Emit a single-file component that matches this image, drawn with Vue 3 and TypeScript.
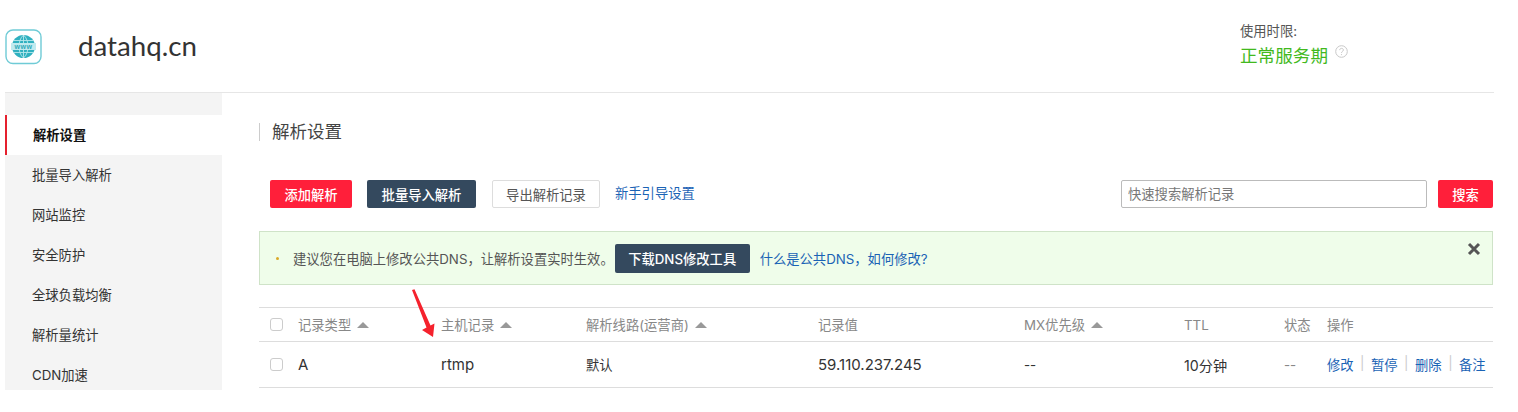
<script setup lang="ts">
const menu = ['解析设置', '批量导入解析', '网站监控', '安全防护', '全球负载均衡', '解析量统计', 'CDN加速'];
const actions = ['修改', '暂停', '删除', '备注'];
</script>

<template>
  <div class="page">
    <header class="top">
      <svg class="logo" width="38" height="36" viewBox="0 0 38 36">
        <rect x="1" y="1" width="35" height="33.5" rx="7" fill="#fff" stroke="#6fcbd6" stroke-width="1.4" />
        <circle cx="18.5" cy="17.5" r="11.5" fill="#2fb0bf" />
        <path d="M8 11.5h21M8 23.5h21M18.5 6v23M18.5 6c-6 5-6 18 0 23M18.5 6c6 5 6 18 0 23" fill="none" stroke="#b5e6eb" stroke-width="0.9" />
        <rect x="6" y="14" width="25" height="7" fill="#bfeaef" />
        <text x="18.5" y="20" text-anchor="middle" font-size="7" font-weight="700" letter-spacing="0.5" fill="#2fa9b9" font-family="Liberation Sans, sans-serif">www</text>
      </svg>
      <h1 class="domain">datahq.cn</h1>
      <div class="term">
        <div class="term-label">使用时限:</div>
        <div class="term-value">
          正常服务期
          <svg class="help" width="13" height="13" viewBox="0 0 13 13">
            <circle cx="6.5" cy="6.5" r="5.8" fill="none" stroke="#c8c8c8" />
            <path d="M4.7 5.1c0-2.3 3.7-2.3 3.7-.1 0 1.4-1.9 1.4-1.9 2.9" fill="none" stroke="#c8c8c8" />
            <circle cx="6.5" cy="9.6" r="0.6" fill="#c8c8c8" />
          </svg>
        </div>
      </div>
    </header>

    <div class="body">
      <nav class="side">
        <a v-for="(m, i) in menu" :key="m" class="side-item" :class="{ active: i === 0 }">{{ m }}</a>
      </nav>

      <main class="main">
        <h2 class="title">解析设置</h2>

        <div class="toolbar">
          <button class="btn red">添加解析</button>
          <button class="btn dark batch">批量导入解析</button>
          <button class="btn plain">导出解析记录</button>
          <a class="link guide">新手引导设置</a>
          <input class="search" placeholder="快速搜索解析记录" />
          <button class="btn red search-btn">搜索</button>
        </div>

        <div class="alert">
          <span class="dot"></span>
          <span class="alert-text">建议您在电脑上修改公共DNS，让解析设置实时生效。</span>
          <button class="btn dark dl">下载DNS修改工具</button>
          <a class="link">什么是公共DNS，如何修改?</a>
          <svg class="close" width="14" height="14" viewBox="0 0 14 14">
            <path d="M2 2l10 10M12 2L2 12" stroke="#555" stroke-width="3" />
          </svg>
        </div>

        <div class="table">
          <div class="row head">
            <span class="check"></span>
            <span>记录类型 <i class="sort"></i></span>
            <span>主机记录 <i class="sort"></i></span>
            <span>解析线路(运营商) <i class="sort"></i></span>
            <span>记录值</span>
            <span>MX优先级 <i class="sort"></i></span>
            <span>TTL</span>
            <span>状态</span>
            <span>操作</span>
          </div>
          <div class="row data">
            <span class="check"></span>
            <span class="latin">A</span>
            <span class="latin">rtmp</span>
            <span>默认</span>
            <span class="latin">59.110.237.245</span>
            <span>--</span>
            <span class="ttl">10分钟</span>
            <span class="muted">--</span>
            <span class="ops">
              <template v-for="(a, i) in actions" :key="a">
                <i v-if="i > 0" class="sep">|</i>
                <a class="link">{{ a }}</a>
              </template>
            </span>
          </div>
          <svg class="arrow" width="24" height="48" viewBox="0 0 24 48">
            <path d="M0 0 L2.5 -0.8 L18.5 35.5 L22.5 33.5 L21 47 L10 40 L14.5 37.5 Z" fill="#f5222d" />
          </svg>
        </div>
      </main>
    </div>
  </div>
</template>

<style>
html,
body {
  margin: 0;
  background: #fff;
  overflow: hidden;
}
</style>

<style scoped>
.page {
  width: 1518px;
  height: 412px;
  padding: 0 24px 0 5px;
  box-sizing: border-box;
  overflow: hidden;
  font-family: Inter, "Noto Sans CJK SC", sans-serif;
  font-size: 13.3px;
  color: #333;
}

.top {
  height: 88px;
  display: flex;
  align-items: center;
  border-bottom: 1px solid #e6e6e6;
  padding-bottom: 4px;
}

.logo {
  flex: none;
  margin-top: 6px;
}

.domain {
  margin: 2px 0 0 35px;
  font-family: Lato, sans-serif;
  font-size: 27.7px;
  font-weight: 400;
  color: #333;
}

.term {
  margin-left: auto;
  width: 254px;
  margin-top: 2px;
}

.term-label {
  color: #555;
  line-height: 18px;
}

.term-value {
  margin-top: 4px;
  font-size: 17.6px;
  line-height: 24px;
  color: #42b91e;
  display: flex;
  align-items: flex-start;
  gap: 7px;
}

.help {
  margin-top: 1px;
}

.body {
  display: flex;
}

.side {
  width: 217px;
  flex: none;
  height: 297px;
  padding-top: 22px;
  box-sizing: border-box;
  background: #f4f4f4;
  overflow: hidden;
}

.side-item {
  display: block;
  height: 40px;
  line-height: 40px;
  padding-left: 27px;
  color: #333;
}

.side-item.active {
  background: #fff;
  border-left: 2px solid #e5202e;
  padding-left: 26px;
  font-weight: 700;
  color: #111;
}

.main {
  flex: 1;
  padding-left: 37px;
  margin-right: 1px;
  min-width: 0;
}

.title {
  margin: 30px 0 0;
  height: 18px;
  line-height: 18px;
  padding-left: 12px;
  border-left: 1px solid #ccc;
  font-size: 17.5px;
  font-weight: 400;
  color: #444;
}

.toolbar {
  margin-top: 39px;
  display: flex;
  align-items: center;
  height: 28px;
}

.btn {
  height: 28px;
  box-sizing: border-box;
  border: 0;
  border-radius: 2px;
  padding: 0;
  font-family: inherit;
  font-size: 13.3px;
  font-weight: 500;
  color: #fff;
}

.btn.red {
  width: 82px;
  margin-left: 11px;
  background: #ff1f3a;
}

.btn.dark {
  background: #34495e;
}

.batch {
  width: 109px;
  margin-left: 15px;
}

.plain {
  width: 108px;
  margin-left: 16px;
  background: #fff;
  border: 1px solid #ddd;
  color: #555;
  font-weight: 400;
}

.link {
  color: #1a63b5;
}

.guide {
  margin-left: 15px;
  margin-top: -3px;
}

.search {
  margin-left: auto;
  width: 306px;
  height: 28px;
  box-sizing: border-box;
  border: 1px solid #bbb;
  border-radius: 2px;
  padding: 0 6px;
  font-family: inherit;
  font-size: 13.3px;
  outline: none;
}

.search::placeholder {
  color: #777;
}

.search-btn.search-btn {
  width: 55px;
  margin-left: 11px;
}

.alert {
  position: relative;
  margin-top: 23px;
  height: 54px;
  box-sizing: border-box;
  display: flex;
  align-items: center;
  padding-left: 16px;
  background: #effdea;
  border: 1px solid #cfe3c8;
  color: #555;
}

.dot {
  width: 3px;
  height: 3px;
  border-radius: 50%;
  background: #d9a928;
  margin-right: 14px;
}

.dl {
  width: 135px;
  height: 29px;
  margin: 0 10px 0 1px;
}

.close {
  position: absolute;
  right: 11px;
  top: 10px;
}

.table {
  position: relative;
  margin-top: 22px;
  border-top: 1px solid #ddd;
}

.row {
  display: grid;
  grid-template-columns: 39px 143px 145px 232px 206px 160px 100px 43px 1fr;
  align-items: center;
  border-bottom: 1px solid #ddd;
}

.row > :first-child {
  margin-left: 11px;
}

.head {
  height: 33px;
  color: #888;
}

.data {
  height: 45px;
  color: #333;
}

.latin {
  font-size: 15px;
}

.ttl {
  font-size: 14.2px;
}

.check {
  width: 13px;
  height: 13px;
  box-sizing: border-box;
  border: 1px solid #ccc;
  border-radius: 3px;
  background: #fff;
}

.sort {
  display: inline-block;
  vertical-align: 2px;
  margin-left: 2px;
  border-left: 6px solid transparent;
  border-right: 6px solid transparent;
  border-bottom: 6px solid #999;
}

.muted {
  color: #888;
}

.ops {
  display: flex;
  gap: 6.5px;
  white-space: nowrap;
}

.sep {
  font-style: normal;
  color: #ccc;
}

.arrow {
  position: absolute;
  left: 153px;
  top: -18px;
  overflow: visible;
}
</style>
